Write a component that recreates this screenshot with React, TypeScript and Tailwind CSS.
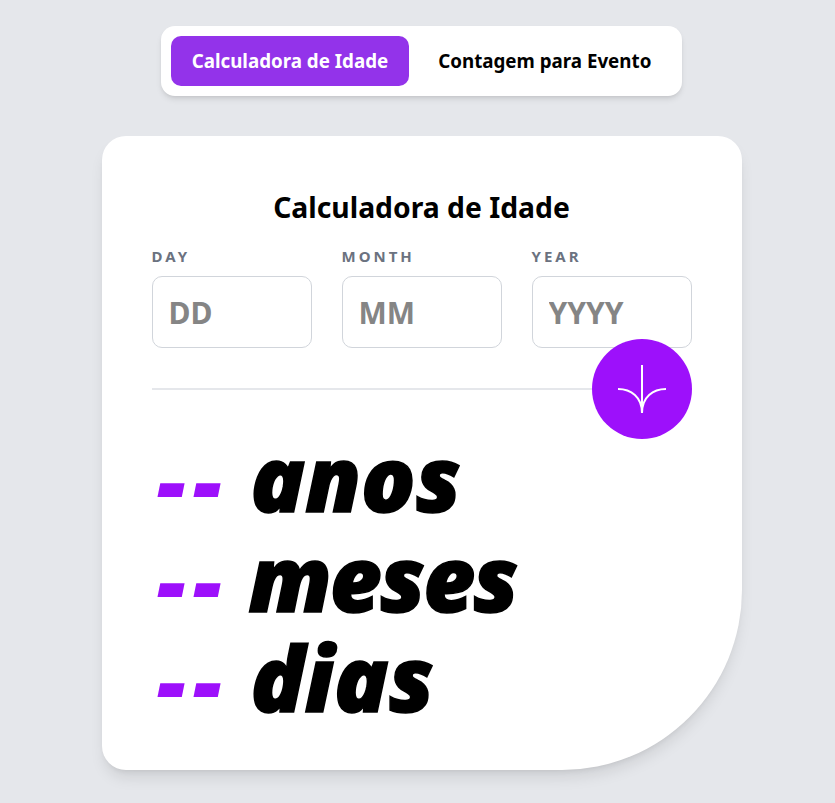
export default function App() {
  const fields = [
    { label: "DAY", placeholder: "DD" },
    { label: "MONTH", placeholder: "MM" },
    { label: "YEAR", placeholder: "YYYY" },
  ];
  const results = [
    { word: "anos", cls: "ml-0" },
    { word: "meses", cls: "-ml-0.5 tracking-[-2px]" },
    { word: "dias", cls: "ml-0" },
  ];

  return (
    <div className="min-h-[803px] bg-[#e5e7eb] flex flex-col items-center pt-[26px] pl-2 font-['Noto_Sans','Open_Sans',sans-serif] overflow-hidden">
      {/* tabs */}
      <div className="flex items-center bg-white rounded-[14px] shadow-md p-[10px] gap-2 h-[70px]">
        <button className="h-[50px] pt-px px-[21px] rounded-[10px] bg-[#9333ea] text-white font-bold text-[18.75px]">
          Calculadora de Idade
        </button>
        <button className="h-[50px] pt-px px-[21px] rounded-[10px] text-black font-bold text-[18.75px]">
          Contagem para Evento
        </button>
      </div>

      {/* card */}
      <div className="mt-10 w-[640px] h-[634px] bg-white rounded-[24px] rounded-br-[180px] shadow-lg px-[50px] pt-[50px]">
        <h1 className="text-center font-bold text-[28.3px] leading-[42px] text-black">
          Calculadora de Idade
        </h1>
        <div className="flex gap-[30px] mt-[18px]">
          {fields.map((f) => (
            <div key={f.label} className="w-40">
              <label className="block text-[15px] font-bold tracking-[0.2em] text-[#6b7280] leading-5 mb-[10px]">
                {f.label}
              </label>
              <input
                placeholder={f.placeholder}
                className="w-40 h-[72px] rounded-[10px] border border-[#d1d5db] px-4 text-[30px] font-bold placeholder:text-[#858585] outline-none"
              />
            </div>
          ))}
        </div>

        <div className="flex items-center mt-[-9px]">
          <div className="flex-1 h-0.5 bg-[#e5e7eb]" />
          <div className="w-[100px] h-[100px] rounded-full bg-[#9d10fb] flex items-center justify-center">
            <svg width="48" height="48" viewBox="0 0 48 48" fill="none" stroke="white" strokeWidth="2">
              <path d="M24 0v48" />
              <path d="M0 24c13 0 24 8 24 24" />
              <path d="M48 24c-13 0-24 8-24 24" />
            </svg>
          </div>
        </div>

        <div className="mt-[-12px]">
          {results.map((r) => (
            <div key={r.word} className="flex items-center h-[100px] italic font-black text-[90px] leading-[100px] text-black">
              <span className="text-[#9d10fb] w-[99px] pl-[5px] tracking-[0.07em] translate-y-[2px]">--</span>
              <span className={`[-webkit-text-stroke:1.5px_#000] ${r.cls}`}>{r.word}</span>
            </div>
          ))}
        </div>
      </div>
    </div>
  );
}
